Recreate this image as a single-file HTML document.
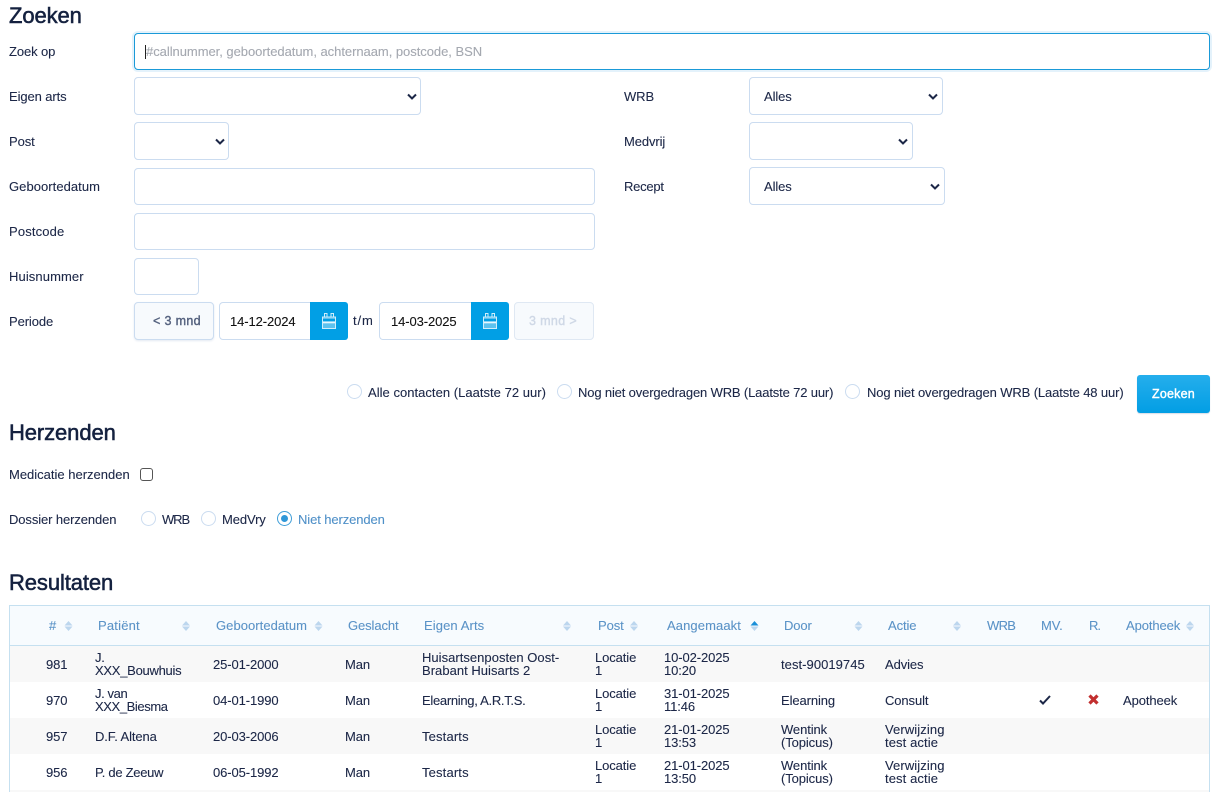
<!DOCTYPE html>
<html lang="nl"><head><meta charset="utf-8"><title>Zoeken</title>
<style>
html,body{margin:0;padding:0;width:1219px;height:792px;overflow:hidden;background:#fff}
body{position:relative;font-family:"Liberation Sans",sans-serif;font-size:13px;color:#1c2747;letter-spacing:-.1px}
.t{position:absolute;white-space:nowrap;line-height:13px;-webkit-text-stroke:.1px currentColor}
.m{-webkit-text-stroke:.4px currentColor;font-size:12.5px;letter-spacing:.35px}
.h{position:absolute;left:9px;font-size:22px;font-weight:400;line-height:26px;color:#14213f;-webkit-text-stroke:.55px #14213f;white-space:nowrap;letter-spacing:-.1px}
.b{position:absolute;box-sizing:border-box;border:1px solid #cbdcf0;border-radius:4px;background:#fff}
.r{position:absolute;box-sizing:border-box;width:15px;height:15px;border:1px solid #cbdcf0;border-radius:50%;background:#fff}
.s{position:absolute;width:10px;height:8px}
.cal{position:absolute;top:302px;width:38px;height:38px;background:#019fe5;border-radius:0 3px 3px 0}
.hc{position:absolute;top:619px;line-height:13px;color:#5b93c7;white-space:nowrap;-webkit-text-stroke:.1px currentColor}
.row{position:absolute;left:10px;width:1199px;height:36px}
</style></head><body>
<div class="h" style="top:3px">Zoeken</div>
<div class="t" style="left:9px;top:45px">Zoek op</div>
<div class="b" style="left:134px;top:33px;width:1076px;height:37px;border-color:#1a9ad8;box-shadow:0 0 0 2px #e4f2fb"></div>
<div style="position:absolute;left:145px;top:45px;width:1px;height:14px;background:#222"></div>
<div class="t" style="left:146px;top:45px;color:#a4a8b0;letter-spacing:-.04px">#callnummer, geboortedatum, achternaam, postcode, BSN</div>

<div class="t" style="left:9px;top:90px">Eigen arts</div>
<div class="b" style="left:134px;top:77px;width:287px;height:38px"></div>
<svg class="s" style="left:407px;top:92px" viewBox="0 0 10 8"><path d="M1 2.500l4 4 4-4" fill="none" stroke="#1c2747" stroke-width="2"/></svg>
<div class="t" style="left:9px;top:135px">Post</div>
<div class="b" style="left:134px;top:122px;width:95px;height:38px"></div>
<svg class="s" style="left:215px;top:137px" viewBox="0 0 10 8"><path d="M1 2.500l4 4 4-4" fill="none" stroke="#1c2747" stroke-width="2"/></svg>
<div class="t" style="left:9px;top:180px;letter-spacing:.05px">Geboortedatum</div>
<div class="b" style="left:134px;top:168px;width:461px;height:37px"></div>
<div class="t" style="left:9px;top:225px;letter-spacing:.15px">Postcode</div>
<div class="b" style="left:134px;top:213px;width:461px;height:37px"></div>
<div class="t" style="left:9px;top:270px;letter-spacing:.1px">Huisnummer</div>
<div class="b" style="left:134px;top:258px;width:65px;height:37px"></div>

<div class="t" style="left:624px;top:90px">WRB</div>
<div class="b" style="left:749px;top:77px;width:194px;height:38px"></div>
<div class="t" style="left:764px;top:90px">Alles</div>
<svg class="s" style="left:928px;top:92px" viewBox="0 0 10 8"><path d="M1 2.500l4 4 4-4" fill="none" stroke="#1c2747" stroke-width="2"/></svg>
<div class="t" style="left:624px;top:135px">Medvrij</div>
<div class="b" style="left:749px;top:122px;width:164px;height:38px"></div>
<svg class="s" style="left:898px;top:137px" viewBox="0 0 10 8"><path d="M1 2.500l4 4 4-4" fill="none" stroke="#1c2747" stroke-width="2"/></svg>
<div class="t" style="left:624px;top:180px;letter-spacing:-.25px">Recept</div>
<div class="b" style="left:749px;top:167px;width:196px;height:38px"></div>
<div class="t" style="left:764px;top:180px">Alles</div>
<svg class="s" style="left:930px;top:182px" viewBox="0 0 10 8"><path d="M1 2.500l4 4 4-4" fill="none" stroke="#1c2747" stroke-width="2"/></svg>

<div class="t" style="left:9px;top:315px">Periode</div>
<div class="b" style="left:134px;top:302px;width:80px;height:38px;background:#f7fafd;box-shadow:0 1px 2px #e3e9f2"></div>
<div class="t m" style="left:153px;top:315px;color:#55627f">&lt; 3 mnd</div>
<div class="b" style="left:219px;top:302px;width:129px;height:38px"></div>
<div class="t" style="left:230px;top:315px;color:#111">14-12-2024</div>
<div class="cal" style="left:310px"><svg width="38" height="38" viewBox="0 0 38 38"><path d="M12.500 15h13v11.500h-13z" fill="#5cc2ef" stroke="#cfeefb"/><path d="M14.500 15v-3.500h2.500v3.500M21 15v-3.500h2.500v3.500" fill="none" stroke="#cfeefb"/><path d="M13 20.500h12" stroke="#e8f7fd" stroke-width="1.600"/><path d="M13 18h12" stroke="#019fe5" stroke-width="2"/></svg></div>
<div class="t" style="left:353px;top:314px;letter-spacing:.9px">t/m</div>
<div class="b" style="left:379px;top:302px;width:130px;height:38px"></div>
<div class="t" style="left:391px;top:315px;color:#111">14-03-2025</div>
<div class="cal" style="left:471px"><svg width="38" height="38" viewBox="0 0 38 38"><path d="M12.500 15h13v11.500h-13z" fill="#5cc2ef" stroke="#cfeefb"/><path d="M14.500 15v-3.500h2.500v3.500M21 15v-3.500h2.500v3.500" fill="none" stroke="#cfeefb"/><path d="M13 20.500h12" stroke="#e8f7fd" stroke-width="1.600"/><path d="M13 18h12" stroke="#019fe5" stroke-width="2"/></svg></div>
<div class="b" style="left:514px;top:302px;width:80px;height:38px;background:#f7fafd;border-color:#dfe8f3"></div>
<div class="t m" style="left:529px;top:315px;color:#cfd8e6">3 mnd &gt;</div>

<div class="r" style="left:347px;top:384px"></div>
<div class="t" style="left:368px;top:386px;letter-spacing:.03px">Alle contacten (Laatste 72 uur)</div>
<div class="r" style="left:557px;top:384px"></div>
<div class="t" style="left:578px;top:386px;letter-spacing:-.15px">Nog niet overgedragen WRB (Laatste 72 uur)</div>
<div class="r" style="left:845px;top:384px"></div>
<div class="t" style="left:867px;top:386px;letter-spacing:-.12px">Nog niet overgedragen WRB (Laatste 48 uur)</div>
<div style="position:absolute;left:1137px;top:375px;width:73px;height:38px;border-radius:3px;background:linear-gradient(#25aeec,#029ee4);box-shadow:0 1px 1px #d5dde6"></div>
<div class="t m" style="left:1152px;top:388px;color:#fff;letter-spacing:.2px">Zoeken</div>

<div class="h" style="top:420px">Herzenden</div>
<div class="t" style="left:9px;top:468px;letter-spacing:0">Medicatie herzenden</div>
<div style="position:absolute;box-sizing:border-box;left:140px;top:468px;width:13px;height:13px;border:1px solid #555;border-radius:3px;background:#fff"></div>
<div class="t" style="left:9px;top:513px">Dossier herzenden</div>
<div class="r" style="left:141px;top:511px"></div>
<div class="t" style="left:162px;top:513px;letter-spacing:-1.100px">WRB</div>
<div class="r" style="left:201px;top:511px"></div>
<div class="t" style="left:222px;top:513px">MedVry</div>
<div class="r" style="left:277px;top:511px;border-color:#3f9ed8"></div>
<div style="position:absolute;left:281px;top:515px;width:7px;height:7px;border-radius:50%;background:#2f97d8"></div>
<div class="t" style="left:298px;top:513px;color:#4f90c8">Niet herzenden</div>

<div class="h" style="top:570px">Resultaten</div>

<div style="position:absolute;box-sizing:border-box;left:9px;top:605px;width:1201px;height:187px;border:1px solid #c5e0f0;border-bottom:0;background:#fff"></div>
<div style="position:absolute;left:10px;top:606px;width:1199px;height:39px;background:#f7fbfe;border-bottom:1px solid #c5e0f0"></div>
<div class="row" style="top:646px;background:#f8f8f8"></div>
<div class="row" style="top:718px;background:#f8f8f8"></div>
<div class="row" style="top:790px;background:#f8f8f8;height:2px"></div>

<div class="hc" style="left:49px">#</div>
<div class="hc" style="left:98px;letter-spacing:.2px">Patiënt</div>
<div class="hc" style="left:216px;letter-spacing:.05px">Geboortedatum</div>
<div class="hc" style="left:348px">Geslacht</div>
<div class="hc" style="left:424px;letter-spacing:.1px">Eigen Arts</div>
<div class="hc" style="left:598px">Post</div>
<div class="hc" style="left:667px;letter-spacing:.1px">Aangemaakt</div>
<div class="hc" style="left:784px">Door</div>
<div class="hc" style="left:888px">Actie</div>
<div class="hc" style="left:987px;letter-spacing:-.7px">WRB</div>
<div class="hc" style="left:1041px">MV.</div>
<div class="hc" style="left:1089px;letter-spacing:-1px">R.</div>
<div class="hc" style="left:1126px">Apotheek</div>

<svg width="1219" height="40" viewBox="0 0 1219 40" style="position:absolute;left:0;top:606px" fill="#bcd6ee">
<path d="M64.500 19.500l4-4.500 4 4.500zM64.500 20.500l4 4.500 4-4.500z"/>
<path d="M182 19.500l4-4.500 4 4.500zM182 20.500l4 4.500 4-4.500z"/>
<path d="M314.500 19.500l4-4.500 4 4.500zM314.500 20.500l4 4.500 4-4.500z"/>
<path d="M563 19.500l4-4.500 4 4.500zM563 20.500l4 4.500 4-4.500z"/>
<path d="M630 19.500l4-4.500 4 4.500zM630 20.500l4 4.500 4-4.500z"/>
<path d="M750.500 19.500l4-4.500 4 4.500z" fill="#1a8fd8"/><path d="M750.500 20.500l4 4.500 4-4.500z"/>
<path d="M854.500 19.500l4-4.500 4 4.500zM854.500 20.500l4 4.500 4-4.500z"/>
<path d="M953 19.500l4-4.500 4 4.500zM953 20.500l4 4.500 4-4.500z"/>
<path d="M1186 19.500l4-4.500 4 4.500zM1186 20.500l4 4.500 4-4.500z"/>
</svg>

<!-- row 1 -->
<div class="t" style="left:46px;top:658px">981</div>
<div class="t" style="left:95px;top:651px;letter-spacing:-.27px">J.<br>XXX_Bouwhuis</div>
<div class="t" style="left:213px;top:658px">25-01-2000</div>
<div class="t" style="left:345px;top:658px">Man</div>
<div class="t" style="left:422px;top:651px;letter-spacing:.03px">Huisartsenposten Oost-<br>Brabant Huisarts 2</div>
<div class="t" style="left:595px;top:651px">Locatie<br>1</div>
<div class="t" style="left:664px;top:651px">10-02-2025<br>10:20</div>
<div class="t" style="left:781px;top:658px;letter-spacing:.05px">test-90019745</div>
<div class="t" style="left:885px;top:658px">Advies</div>
<!-- row 2 -->
<div class="t" style="left:46px;top:694px">970</div>
<div class="t" style="left:95px;top:687px;letter-spacing:-.4px">J. van<br>XXX_Biesma</div>
<div class="t" style="left:213px;top:694px">04-01-1990</div>
<div class="t" style="left:345px;top:694px">Man</div>
<div class="t" style="left:422px;top:694px;letter-spacing:-.3px">Elearning, A.R.T.S.</div>
<div class="t" style="left:595px;top:687px">Locatie<br>1</div>
<div class="t" style="left:664px;top:687px">31-01-2025<br>11:46</div>
<div class="t" style="left:781px;top:694px">Elearning</div>
<div class="t" style="left:885px;top:694px">Consult</div>
<svg style="position:absolute;left:1038px;top:693px" width="14" height="14" viewBox="0 0 14 14"><path d="M2 7.500l3 3 7-7.500" fill="none" stroke="#1c2747" stroke-width="2"/></svg>
<svg style="position:absolute;left:1087px;top:693px" width="13" height="13" viewBox="0 0 13 13"><path d="M2.500 2.500l8 8M10.500 2.500l-8 8" fill="none" stroke="#c22f2f" stroke-width="3.200"/></svg>
<div class="t" style="left:1123px;top:694px">Apotheek</div>
<!-- row 3 -->
<div class="t" style="left:46px;top:730px">957</div>
<div class="t" style="left:95px;top:730px">D.F. Altena</div>
<div class="t" style="left:213px;top:730px">20-03-2006</div>
<div class="t" style="left:345px;top:730px">Man</div>
<div class="t" style="left:422px;top:730px;letter-spacing:.15px">Testarts</div>
<div class="t" style="left:595px;top:723px">Locatie<br>1</div>
<div class="t" style="left:664px;top:723px">21-01-2025<br>13:53</div>
<div class="t" style="left:781px;top:723px">Wentink<br>(Topicus)</div>
<div class="t" style="left:885px;top:723px;letter-spacing:.1px">Verwijzing<br>test actie</div>
<!-- row 4 -->
<div class="t" style="left:46px;top:766px">956</div>
<div class="t" style="left:95px;top:766px;letter-spacing:-.28px">P. de Zeeuw</div>
<div class="t" style="left:213px;top:766px">06-05-1992</div>
<div class="t" style="left:345px;top:766px">Man</div>
<div class="t" style="left:422px;top:766px;letter-spacing:.15px">Testarts</div>
<div class="t" style="left:595px;top:759px">Locatie<br>1</div>
<div class="t" style="left:664px;top:759px">21-01-2025<br>13:50</div>
<div class="t" style="left:781px;top:759px">Wentink<br>(Topicus)</div>
<div class="t" style="left:885px;top:759px;letter-spacing:.1px">Verwijzing<br>test actie</div>
</body></html>
